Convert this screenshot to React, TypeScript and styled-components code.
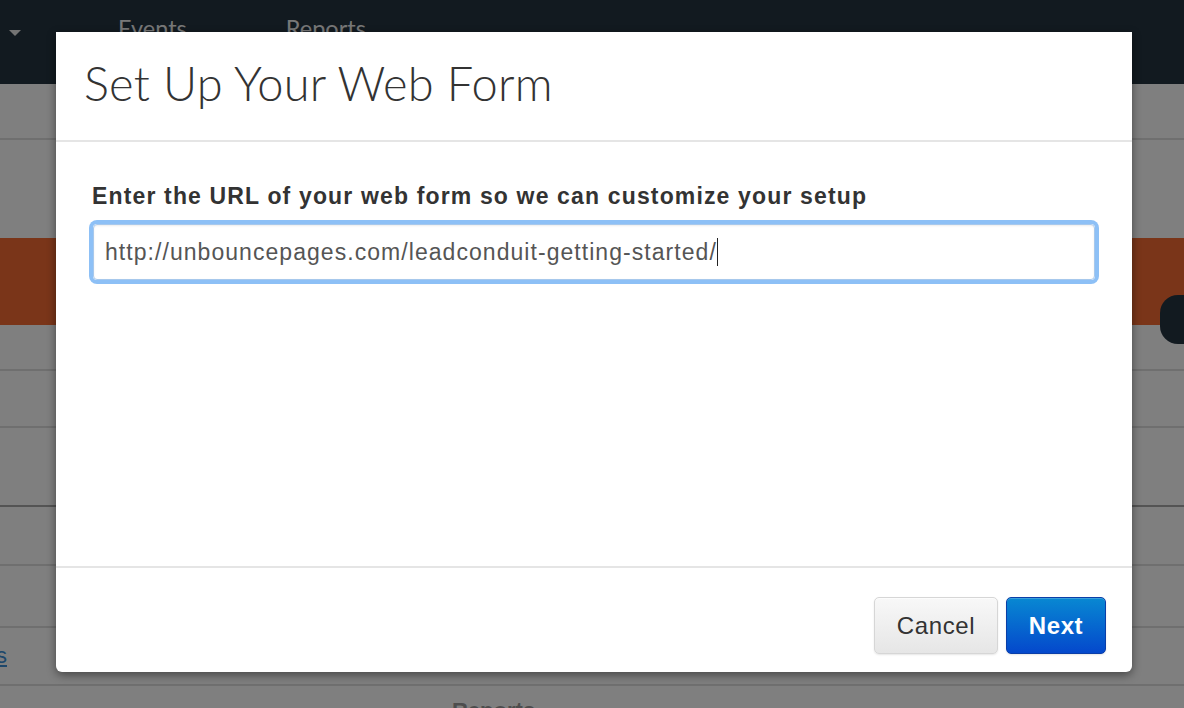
import React from "react";
import styled, { createGlobalStyle } from "styled-components";

const Global = createGlobalStyle`
  html, body { margin: 0; padding: 0; }
  body {
    width: 1184px;
    height: 708px;
    overflow: hidden;
    background: #ffffff;
    font-family: "Liberation Sans", Arial, sans-serif;
  }
`;

const Page = styled.div`
  position: relative;
  width: 1184px;
  height: 708px;
  overflow: hidden;
  display: flex;
  flex-direction: column;
`;

const NavBar = styled.div`
  height: 84px;
  flex: none;
  background: #243440;
  display: flex;
  align-items: flex-start;
  padding-top: 13px;
  box-sizing: border-box;
`;

const Caret = styled.div`
  width: 0;
  height: 0;
  margin: 17px 0 0 9px;
  border-left: 6px solid transparent;
  border-right: 6px solid transparent;
  border-top: 6px solid #e8e8e8;
`;

const NavLink = styled.div<{ $left: number }>`
  margin-left: ${(p) => p.$left}px;
  color: #f0f0f0;
  font-family: "Lato", "Liberation Sans", sans-serif;
  font-size: 23.5px;
  line-height: 30px;
`;

const Row = styled.div<{ $h: number; $line?: string; $bg?: string }>`
  height: ${(p) => p.$h}px;
  flex: none;
  background: ${(p) => p.$bg || "#ffffff"};
  border-bottom: 2px solid ${(p) => p.$line || "#dedede"};
  box-sizing: border-box;
  position: relative;
`;

const Band = styled.div`
  height: 87px;
  flex: none;
  background: #f46a33;
`;

const Pill = styled.div`
  position: absolute;
  right: -20px;
  top: -30px;
  width: 44px;
  height: 49px;
  border-radius: 18px;
  background: #243440;
`;

const LinkText = styled.a`
  position: absolute;
  left: -4px;
  top: 14px;
  color: #3b8fd6;
  font-size: 22px;
  line-height: 28px;
  text-decoration: underline;
`;

const FaintText = styled.div`
  position: absolute;
  left: 452px;
  top: 12px;
  color: #9a9a9a;
  font-weight: bold;
  font-size: 22px;
`;

const Overlay = styled.div`
  position: absolute;
  inset: 0;
  background: rgba(0, 0, 0, 0.5);
`;

const Modal = styled.div`
  position: absolute;
  left: 56px;
  top: 32px;
  width: 1076px;
  height: 640px;
  background: #ffffff;
  border-radius: 0 0 6px 6px;
  box-shadow: 0 3px 10px rgba(0, 0, 0, 0.45);
  display: flex;
  flex-direction: column;
`;

const Header = styled.div`
  height: 110px;
  flex: none;
  box-sizing: border-box;
  border-bottom: 2px solid #e5e5e5;
  padding: 23px 28px 0;
`;

const Title = styled.h1`
  margin: 0;
  font-family: "Lato", "Liberation Sans", sans-serif;
  font-weight: 300;
  font-size: 47px;
  line-height: 56px;
  color: #333333;
  letter-spacing: 0.2px;
`;

const Body = styled.div`
  flex: 1;
  padding: 39px 32px 0 32px;
  border-bottom: 2px solid #e5e5e5;
`;

const Label = styled.div`
  font-weight: bold;
  font-size: 23px;
  letter-spacing: 1.15px;
  color: #333333;
  line-height: 30px;
  margin-left: 4px;
`;

const InputBox = styled.div`
  margin: 13px 5px 0;
  height: 56px;
  box-sizing: border-box;
  border: 1px solid #a7c8ec;
  border-radius: 4px;
  box-shadow: 0 0 0 4px #8dc0f6, inset 0 1px 2px rgba(0, 0, 0, 0.08);
  display: flex;
  align-items: center;
  padding: 0 11px;
  font-size: 23px;
  letter-spacing: 1.05px;
  color: #555555;
`;

const TextCaret = styled.span`
  display: inline-block;
  width: 1px;
  height: 28px;
  background: #222222;
  margin-left: 0;
  vertical-align: middle;
`;

const Footer = styled.div`
  height: 104px;
  flex: none;
  display: flex;
  justify-content: flex-end;
  align-items: flex-start;
  gap: 8px;
  padding: 29px 26px 0 0;
  box-sizing: border-box;
`;

const Button = styled.button<{ $primary?: boolean }>`
  height: 57px;
  padding: 0 20px;
  min-width: ${(p) => (p.$primary ? 100 : 124)}px;
  border-radius: 5px;
  font-family: "Liberation Sans", Arial, sans-serif;
  font-size: 24px;
  letter-spacing: 0.6px;
  font-weight: ${(p) => (p.$primary ? "bold" : "normal")};
  color: ${(p) => (p.$primary ? "#ffffff" : "#333333")};
  background: ${(p) =>
    p.$primary
      ? "linear-gradient(to bottom, #0888d2, #0448cc)"
      : "linear-gradient(to bottom, #f8f8f8, #e6e6e6)"};
  border: 1px solid ${(p) => (p.$primary ? "#0a3ea8" : "#d6d6d6")};
  box-shadow: ${(p) =>
    p.$primary
      ? "inset 0 1px 0 rgba(255,255,255,0.2), 0 1px 2px rgba(0,0,0,0.1)"
      : "inset 0 1px 0 rgba(255,255,255,0.6), 0 1px 2px rgba(0,0,0,0.1)"};
  cursor: pointer;
`;

export default function App() {
  return (
    <>
      <Global />
      <Page>
        <NavBar>
          <Caret />
          <NavLink $left={97}>Events</NavLink>
          <NavLink $left={99}>Reports</NavLink>
        </NavBar>
        <Row $h={56} />
        <Row $h={98} $line="#ffffff" />
        <Band />
        <Row $h={46}>
          <Pill />
        </Row>
        <Row $h={57} />
        <Row $h={79} $line="#a8a8a8" />
        <Row $h={59} />
        <Row $h={62} />
        <Row $h={58}>
          <LinkText>s</LinkText>
        </Row>
        <Row $h={40} $line="#ffffff">
          <FaintText>Reports</FaintText>
        </Row>
        <Overlay />
        <Modal>
          <Header>
            <Title>Set Up Your Web Form</Title>
          </Header>
          <Body>
            <Label>Enter the URL of your web form so we can customize your setup</Label>
            <InputBox>
              http://unbouncepages.com/leadconduit-getting-started/
              <TextCaret />
            </InputBox>
          </Body>
          <Footer>
            <Button>Cancel</Button>
            <Button $primary>Next</Button>
          </Footer>
        </Modal>
      </Page>
    </>
  );
}
